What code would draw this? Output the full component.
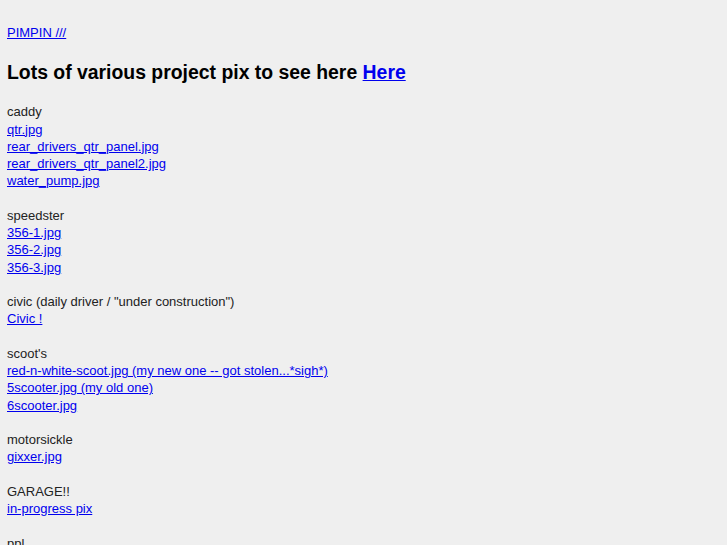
import React from "react";

const groups = [
  {
    title: "caddy",
    links: ["qtr.jpg", "rear_drivers_qtr_panel.jpg", "rear_drivers_qtr_panel2.jpg", "water_pump.jpg"],
  },
  { title: "speedster", links: ["356-1.jpg", "356-2.jpg", "356-3.jpg"] },
  { title: 'civic (daily driver / "under construction")', links: ["Civic !"] },
  {
    title: "scoot's",
    links: [
      "red-n-white-scoot.jpg (my new one -- got stolen...*sigh*)",
      "5scooter.jpg (my old one)",
      "6scooter.jpg",
    ],
  },
  { title: "motorsickle", links: ["gixxer.jpg"] },
  { title: "GARAGE!!", links: ["in-progress pix"] },
  { title: "ppl", links: [] },
];

export default function App() {
  return (
    <div className="h-[545px] overflow-hidden bg-[#efefef] pl-[7px] pt-[24px] text-[13px] leading-[17.25px] text-[#222] font-['Liberation_Sans',Arial,sans-serif]">
      {/* top link */}
      <a href="#" className="text-[#0000ee] underline">PIMPIN ///</a>

      <h1 className="mt-[20px] mb-[20px] text-[19.4px] leading-[22px] font-bold text-black">
        Lots of various project pix to see here{" "}
        <a href="#" className="text-[#0000ee] underline">Here</a>
      </h1>

      {groups.map((g) => (
        <div key={g.title} className="mb-[17.25px]">
          <div>{g.title}</div>
          {g.links.map((l) => (
            <div key={l}>
              <a href="#" className="text-[#0000ee] underline">{l}</a>
            </div>
          ))}
        </div>
      ))}
    </div>
  );
}
